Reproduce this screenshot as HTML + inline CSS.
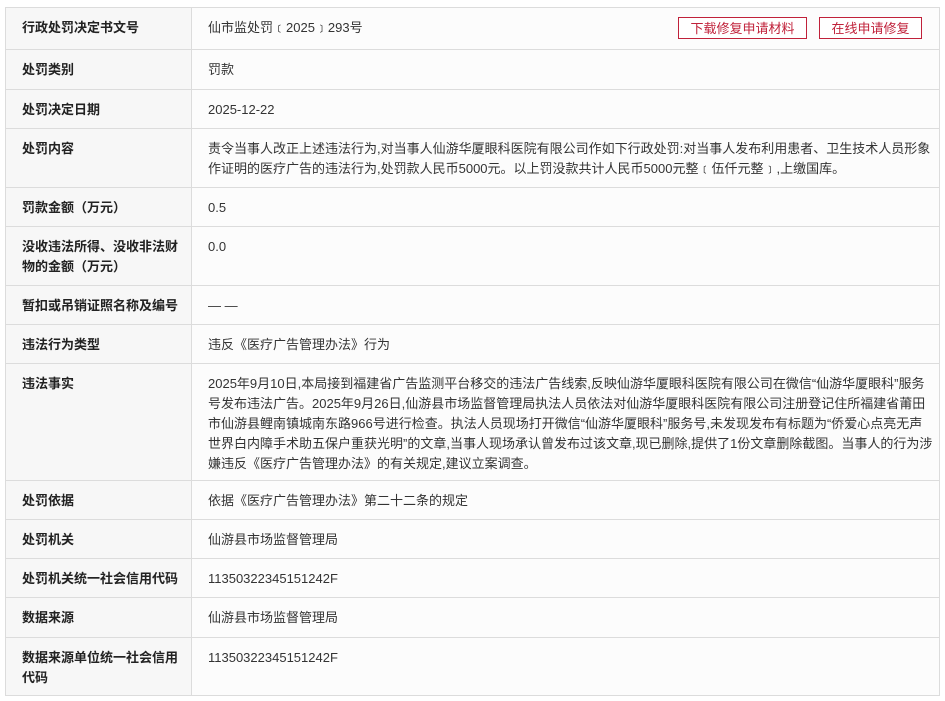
<!DOCTYPE html>
<html><head><meta charset="utf-8"><style>
body{margin:0;background:#fff;font-family:"Liberation Sans","Noto Sans CJK SC",sans-serif;font-size:13px;color:#333;}
table{position:absolute;left:5px;top:7px;width:935px;border-collapse:collapse;table-layout:fixed;background:#fafafa;}
td{border:1px solid #dcdcdc;vertical-align:top;padding:10px 4px 0 16px;line-height:20px;box-sizing:border-box;overflow:hidden;}
td.l{width:186px;font-weight:bold;color:#222;background:#f7f7f7;padding-right:6px;}
td.v{background:#fcfcfc;}
.b{position:absolute;top:17px;height:22px;border:1px solid #c0213a;color:#c0213a;font-size:13px;line-height:21px;text-align:center;box-sizing:border-box;background:#fff;}
</style></head><body>
<table>
<tr style="height:42px"><td class="l">行政处罚决定书文号</td><td class="v">仙市监处罚﹝2025﹞293号</td></tr>
<tr style="height:40px"><td class="l">处罚类别</td><td class="v">罚款</td></tr>
<tr style="height:39px"><td class="l">处罚决定日期</td><td class="v">2025-12-22</td></tr>
<tr style="height:59px"><td class="l">处罚内容</td><td class="v">责令当事人改正上述违法行为,对当事人仙游华厦眼科医院有限公司作如下行政处罚:对当事人发布利用患者、卫生技术人员形象作证明的医疗广告的违法行为,处罚款人民币5000元。以上罚没款共计人民币5000元整﹝伍仟元整﹞,上缴国库。</td></tr>
<tr style="height:39px"><td class="l">罚款金额（万元）</td><td class="v">0.5</td></tr>
<tr style="height:59px"><td class="l">没收违法所得、没收非法财物的金额（万元）</td><td class="v">0.0</td></tr>
<tr style="height:39px"><td class="l" style="white-space:nowrap">暂扣或吊销证照名称及编号</td><td class="v">— —</td></tr>
<tr style="height:39px"><td class="l">违法行为类型</td><td class="v">违反《医疗广告管理办法》行为</td></tr>
<tr style="height:117px"><td class="l">违法事实</td><td class="v">2025年9月10日,本局接到福建省广告监测平台移交的违法广告线索,反映仙游华厦眼科医院有限公司在微信“仙游华厦眼科”服务号发布违法广告。2025年9月26日,仙游县市场监督管理局执法人员依法对仙游华厦眼科医院有限公司注册登记住所福建省莆田市仙游县鲤南镇城南东路966号进行检查。执法人员现场打开微信“仙游华厦眼科”服务号,未发现发布有标题为“侨爱心点亮无声世界白内障手术助五保户重获光明”的文章,当事人现场承认曾发布过该文章,现已删除,提供了1份文章删除截图。当事人的行为涉嫌违反《医疗广告管理办法》的有关规定,建议立案调查。</td></tr>
<tr style="height:39px"><td class="l">处罚依据</td><td class="v">依据《医疗广告管理办法》第二十二条的规定</td></tr>
<tr style="height:39px"><td class="l">处罚机关</td><td class="v">仙游县市场监督管理局</td></tr>
<tr style="height:39px"><td class="l" style="white-space:nowrap">处罚机关统一社会信用代码</td><td class="v">11350322345151242F</td></tr>
<tr style="height:40px"><td class="l">数据来源</td><td class="v">仙游县市场监督管理局</td></tr>
<tr style="height:58px"><td class="l">数据来源单位统一社会信用代码</td><td class="v">11350322345151242F</td></tr>
</table>
<div class="b" style="left:678px;width:129px">下载修复申请材料</div>
<div class="b" style="left:819px;width:103px">在线申请修复</div>
</body></html>
